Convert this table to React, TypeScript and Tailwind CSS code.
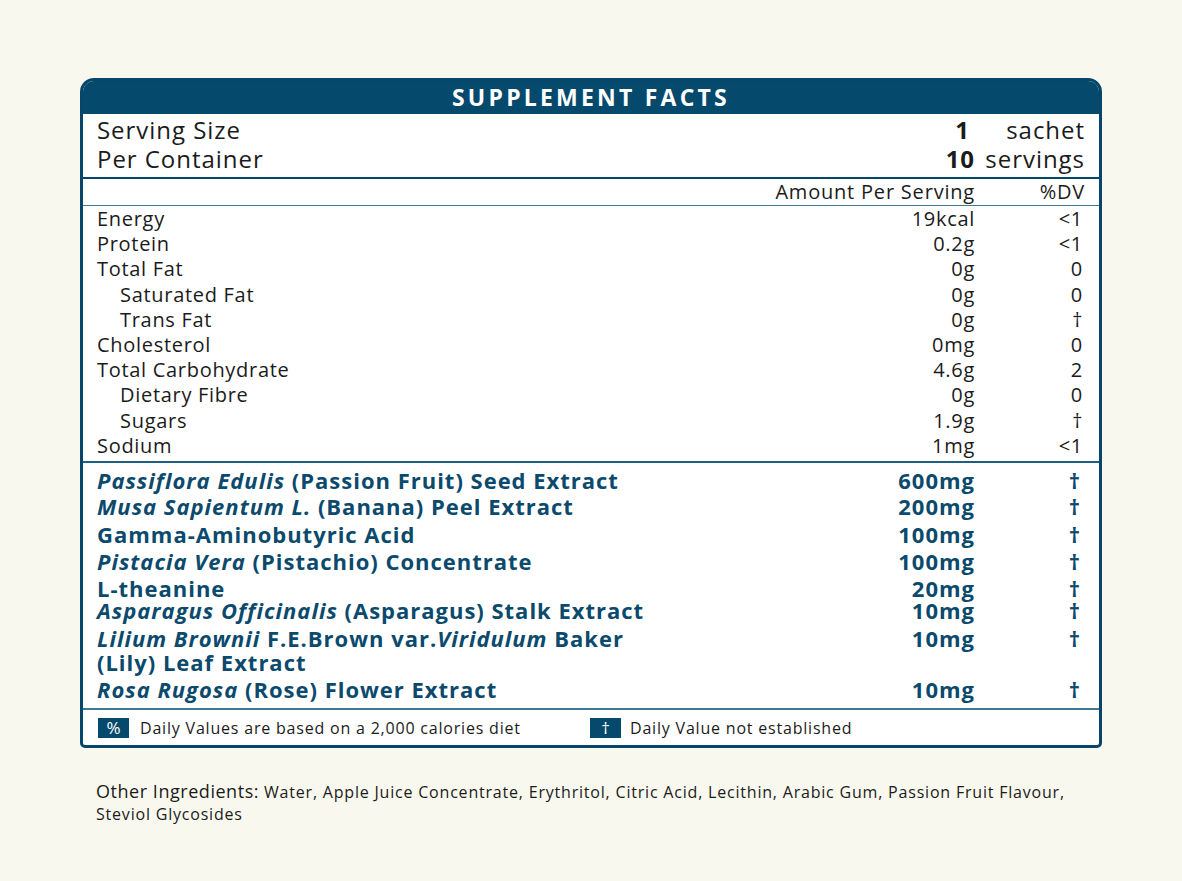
import React from 'react';

const NAVY = 'text-[#0b4a6d]';

type Nutrient = { label: string; amount: string; dv: string; indent?: boolean };

const nutrients: Nutrient[] = [
  { label: 'Energy', amount: '19kcal', dv: '<1' },
  { label: 'Protein', amount: '0.2g', dv: '<1' },
  { label: 'Total Fat', amount: '0g', dv: '0' },
  { label: 'Saturated Fat', amount: '0g', dv: '0', indent: true },
  { label: 'Trans Fat', amount: '0g', dv: '†', indent: true },
  { label: 'Cholesterol', amount: '0mg', dv: '0' },
  { label: 'Total Carbohydrate', amount: '4.6g', dv: '2' },
  { label: 'Dietary Fibre', amount: '0g', dv: '0', indent: true },
  { label: 'Sugars', amount: '1.9g', dv: '†', indent: true },
  { label: 'Sodium', amount: '1mg', dv: '<1' },
];

type Ingredient = { id: string; name: React.ReactNode; amount: string; row: string };

const ingredients: Ingredient[] = [
  {
    id: 'passiflora',
    name: (<><i>Passiflora Edulis</i> (Passion Fruit) Seed Extract</>),
    amount: '600mg',
    row: 'leading-[22px]',
  },
  {
    id: 'musa',
    name: (<><i>Musa Sapientum L.</i> (Banana) Peel Extract</>),
    amount: '200mg',
    row: 'mt-[4px] leading-[22px]',
  },
  { id: 'gaba', name: 'Gamma-Aminobutyric Acid', amount: '100mg', row: 'mt-[6px] leading-[22px]' },
  {
    id: 'pistacia',
    name: (<><i>Pistacia Vera</i> (Pistachio) Concentrate</>),
    amount: '100mg',
    row: 'mt-[5px] leading-[22px]',
  },
  { id: 'theanine', name: 'L-theanine', amount: '20mg', row: 'mt-[5px] leading-[22px]' },
  {
    id: 'asparagus',
    name: (<><i>Asparagus Officinalis</i> (Asparagus) Stalk Extract</>),
    amount: '10mg',
    row: 'leading-[22px]',
  },
  {
    id: 'lilium',
    name: (<><i>Lilium Brownii</i> F.E.Brown var.<i>Viridulum</i> Baker<br />(Lily) Leaf Extract</>),
    amount: '10mg',
    row: 'mt-[5px] leading-[24px]',
  },
  {
    id: 'rosa',
    name: (<><i>Rosa Rugosa</i> (Rose) Flower Extract</>),
    amount: '10mg',
    row: 'mt-[4px] leading-[22px]',
  },
];

export default function App() {
  return (
    <div
      className="min-h-screen w-full bg-[#f8f8ee] pt-[78px] pl-[80px] text-[#1b1b1b]"
      style={{ fontFamily: '"Open Sans", "Noto Sans", sans-serif' }}
    >
      {/* Label panel */}
      <div className="w-[1022px] overflow-hidden rounded-t-[14px] rounded-b-[5px] border-[3px] border-[#074669] bg-white">
        {/* Title */}
        <div className="flex h-[33px] items-center justify-center bg-[#054a6d]">
          <h1 className="text-[23px] font-bold tracking-[0.14em] text-white leading-none">SUPPLEMENT FACTS</h1>
        </div>

        {/* Serving */}
        <div className="px-[14px] pt-[1px] pb-[4px] text-[24px] leading-[29px] tracking-[0.04em]">
          <div className="flex">
            <span className="flex-1">Serving Size</span>
            <span className="font-bold pr-[5px]">1</span>
            <span className="w-[110px] text-right">sachet</span>
          </div>
          <div className="flex">
            <span className="flex-1">Per Container</span>
            <span className="font-bold">10</span>
            <span className="w-[110px] text-right">servings</span>
          </div>
        </div>

        <div className="h-[2px] bg-[#074669]" />

        <div className="flex px-[14px] text-[20px] leading-[26px] tracking-[0.04em]">
          <span className="flex-1 text-right">Amount Per Serving</span>
          <span className="w-[110px] text-right">%DV</span>
        </div>

        <div className="h-px bg-[#3b7b98]" />

        {/* Nutrients */}
        <div className="px-[14px] pb-[3px] text-[20px] leading-[25.2px] tracking-[0.035em]">
          {nutrients.map((n) => (
            <div key={n.label} className="flex">
              <span className={`flex-1 ${n.indent ? 'pl-[23px]' : ''}`}>{n.label}</span>
              <span className="text-right">{n.amount}</span>
              <span className="w-[110px] pr-[2px] text-right">{n.dv}</span>
            </div>
          ))}
        </div>

        <div className="h-[2px] bg-[#1f5f80]" />

        {/* Ingredients */}
        <div className={`px-[14px] pt-[6px] pb-[8px] text-[22px] font-bold tracking-[0.045em] ${NAVY}`}>
          {ingredients.map((ing) => (
            <div key={ing.id} className={`flex items-start ${ing.row}`}>
              <span className="flex-1">{ing.name}</span>
              <span className="text-right">{ing.amount}</span>
              <span className="w-[110px] pr-[4px] text-right">†</span>
            </div>
          ))}
        </div>

        <div className="h-[2px] bg-[#3b7b98]" />

        {/* Footnotes */}
        <div className="flex h-[35px] items-center px-[15px] text-[16px] tracking-[0.05em]">
          <div className="flex w-[492px] items-center">
            <span className="flex h-[20px] w-[31px] items-center justify-center bg-[#054a6d] text-[17px] tracking-normal text-white">%</span>
            <span className="ml-[11px]">Daily Values are based on a 2,000 calories diet</span>
          </div>
          <div className="flex items-center">
            <span className="flex h-[20px] w-[31px] items-center justify-center bg-[#054a6d] text-[17px] tracking-normal text-white">†</span>
            <span className="ml-[9px]">Daily Value not established</span>
          </div>
        </div>
      </div>

      {/* Other ingredients */}
      <p className="mt-[33px] w-[1010px] pl-[16px] text-[16px] leading-[22px] tracking-[0.05em]">
        <span className="text-[18px] leading-[18px] tracking-[0.03em]">Other Ingredients:</span> Water, Apple Juice Concentrate, Erythritol, Citric Acid, Lecithin, Arabic Gum, Passion Fruit Flavour, Steviol Glycosides
      </p>
    </div>
  );
}
